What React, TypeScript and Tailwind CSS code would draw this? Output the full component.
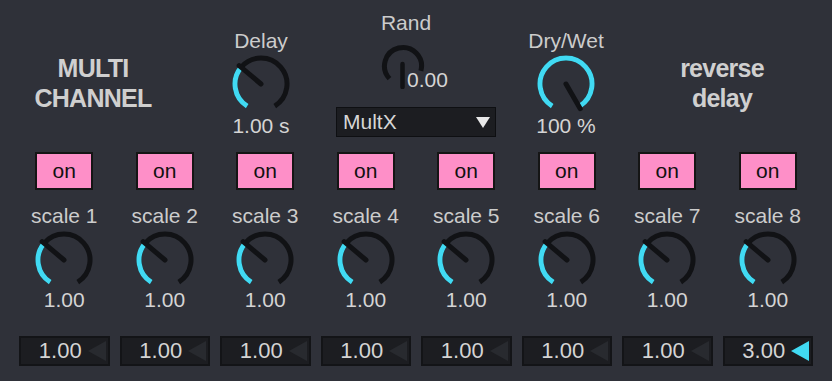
import React from "react";

const CYAN = "#41daf3";
const DARK = "#111215";

function polar(cx: number, cy: number, r: number, deg: number): [number, number] {
  const a = ((deg - 90) * Math.PI) / 180;
  return [cx + r * Math.cos(a), cy + r * Math.sin(a)];
}

function arcPath(cx: number, cy: number, r: number, a0: number, a1: number) {
  const [x0, y0] = polar(cx, cy, r, a0);
  const [x1, y1] = polar(cx, cy, r, a1);
  const large = a1 - a0 > 180 ? 1 : 0;
  return `M ${x0} ${y0} A ${r} ${r} 0 ${large} 1 ${x1} ${y1}`;
}

function Knob({ value, needle }: { value: number; needle: number }) {
  const c = 30;
  const r = 26;
  const a0 = -148;
  const a1 = 148;
  const [nx, ny] = polar(c, c, r + 2.5, needle);
  return (
    <svg width={60} height={60} viewBox="0 0 60 60" className="block">
      <path d={arcPath(c, c, r, a0, a1)} stroke={DARK} strokeWidth={5} fill="none" />
      {value > a0 && (
        <path d={arcPath(c, c, r, a0, value)} stroke={CYAN} strokeWidth={5} fill="none" />
      )}
      <line x1={c} y1={c} x2={nx} y2={ny} stroke={DARK} strokeWidth={5} strokeLinecap="round" />
    </svg>
  );
}

function RandKnob() {
  const c = 23;
  const r = 18.5;
  return (
    <svg width={46} height={46} viewBox="0 0 46 46" className="block shrink-0">
      <path d={arcPath(c, c, r, -133, 105)} stroke={DARK} strokeWidth={5} fill="none" />
      <line x1={22.5} y1={21} x2={22.5} y2={44} stroke={DARK} strokeWidth={4.5} strokeLinecap="round" />
    </svg>
  );
}

function LeftTri({ color }: { color: string }) {
  return (
    <svg width={18} height={20} viewBox="0 0 18 20" className="block shrink-0">
      <polygon points="0,10 18,0 18,20" fill={color} />
    </svg>
  );
}

const boxValues = ["1.00", "1.00", "1.00", "1.00", "1.00", "1.00", "1.00", "3.00"];

export default function App() {
  return (
    <div className="w-[832px] h-[381px] overflow-hidden bg-[#2f3139] font-['Liberation_Sans',Arial,sans-serif] text-[#cccccc]">
      {/* top section */}
      <div className="flex h-[145px]">
        <div className="w-[186px] flex flex-col items-center pt-[53px] text-[25px] font-bold leading-[30px] tracking-[-0.75px] text-[#cfcfcf]">
          <div>MULTI</div>
          <div>CHANNEL</div>
        </div>

        <div className="w-[150px] flex flex-col items-center pt-[29px]">
          <div className="h-[24px] text-[21px] leading-[24px]">Delay</div>
          <div className="mt-[1px]">
            <Knob value={-50} needle={-50} />
          </div>
          <div className="h-[24px] text-[21px] leading-[24px] text-[#d4d4d4]">1.00 s</div>
        </div>

        <div className="w-[160px] flex flex-col">
          <div className="mt-[11px] ml-[40px] w-[60px] h-[24px] text-center text-[21px] leading-[24px]">Rand</div>
          <div className="flex mt-[8px] h-[49px]">
            <div className="ml-[44px]">
              <RandKnob />
            </div>
            <span className="ml-[-19px] mt-[25px] h-[24px] text-[21px] leading-[24px] text-[#d4d4d4]">0.00</span>
          </div>
          <div className="mt-[15px] h-[30px] w-[160px] flex items-center justify-between border border-[#0e0f12] bg-[#1c1d21] pl-[6px] pr-[5px]">
            <span className="text-[21px] leading-[24px] text-[#d6d6d6]">MultX</span>
            <svg width={14} height={11} viewBox="0 0 14 11" className="block">
              <polygon points="0,0 14,0 7,11" fill="#e8e8e8" />
            </svg>
          </div>
        </div>

        <div className="w-[140px] flex flex-col items-center pt-[29px]">
          <div className="h-[24px] text-[21px] leading-[24px]">Dry/Wet</div>
          <div className="mt-[1px]">
            <Knob value={148} needle={150} />
          </div>
          <div className="h-[24px] text-[21px] leading-[24px] text-[#d4d4d4]">100 %</div>
        </div>

        <div className="w-[172px] flex flex-col items-center pt-[53px] text-[25px] font-bold leading-[30px] tracking-[-0.75px] text-[#cfcfcf]">
          <div>reverse</div>
          <div>delay</div>
        </div>
      </div>

      {/* channels */}
      <div className="grid grid-cols-8 px-[14px] pt-[7px]">
        {boxValues.map((v, i) => (
          <div key={i} className="flex flex-col items-center">
            <div className="w-[58px] h-[38px] border-2 border-[#151515] bg-[#fe8fc8] flex items-center justify-center text-[21px] leading-[24px] text-[#111111]">
              on
            </div>
            <div className="mt-[14px] h-[24px] text-[21px] leading-[24px]">scale {i + 1}</div>
            <div className="mt-[2px]">
              <Knob value={-50} needle={-50} />
            </div>
            <div className="h-[20px] text-[21px] leading-[20px] text-[#d4d4d4]">1.00</div>
            <div className="mt-[26px] self-stretch mx-[5px] h-[30px] flex items-center border-2 border-[#131417] bg-[#1c1d21] pl-[12px] pr-[2px]">
              <span className="flex-1 text-center text-[22px] leading-[24px] text-[#d4d4d4]">{v}</span>
              <LeftTri color={i === 7 ? CYAN : "#282a2f"} />
            </div>
          </div>
        ))}
      </div>
    </div>
  );
}
